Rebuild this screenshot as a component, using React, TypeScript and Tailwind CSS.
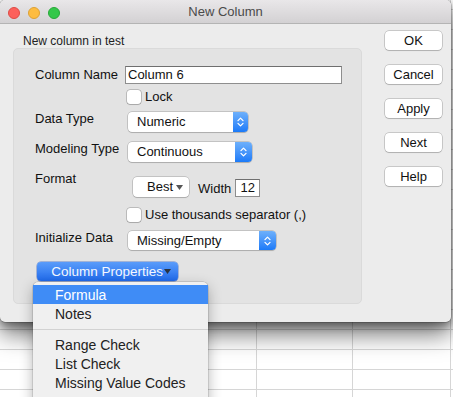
import React from "react";

function Stepper({ w }: { w: string }) {
  return (
    <div className={`${w} self-stretch rounded-r-[4px] bg-linear-to-b from-[#6db0fb] to-[#1a7af8] flex items-center justify-center`}>
      <svg width="7" height="12" viewBox="0 0 7 12" fill="none" stroke="white" strokeWidth="1.3" strokeLinecap="round" strokeLinejoin="round">
        <path d="M1 4.6 L3.5 2.1 L6 4.6" />
        <path d="M1 7.4 L3.5 9.9 L6 7.4" />
      </svg>
    </div>
  );
}

function Popup({ label, cls, step }: { label: string; cls: string; step: string }) {
  return (
    <div className={`flex ${cls} rounded-[4px] bg-white shadow-[0_0_0_0.5px_rgba(0,0,0,0.28),0_1px_1px_rgba(0,0,0,0.12)]`}>
      <div className="flex-1 pl-[9px] flex items-center text-[13px] leading-[16px] text-[#111]">{label}</div>
      <Stepper w={step} />
    </div>
  );
}

function Check() {
  return <div className="w-[14px] h-[14px] rounded-[3px] bg-white shadow-[0_0_0_0.5px_rgba(0,0,0,0.35),0_1px_1px_rgba(0,0,0,0.1)]" />;
}

function Btn({ label }: { label: string }) {
  return (
    <div className="w-[57px] h-[19px] rounded-[4px] bg-white shadow-[0_0_0_0.5px_rgba(0,0,0,0.3),0_1px_1px_rgba(0,0,0,0.12)] flex items-center justify-center text-[13px] leading-[16px] text-[#111]">
      {label}
    </div>
  );
}

const rows = Array.from({ length: 21 });

export default function App() {
  return (
    <div className="relative w-[453px] h-[397px] overflow-hidden bg-white font-['Liberation_Sans',Arial,sans-serif]">
      {/* spreadsheet behind */}
      <div className="-mt-[10px] flex flex-col">
        {rows.map((_, i) => (
          <div key={i} className="flex h-[20px] border-b border-[#d6d6d6]">
            <div className="w-[63px] border-r border-[#d6d6d6]" />
            <div className="w-[97px] border-r border-[#d6d6d6]" />
            <div className="w-[97px] border-r border-[#d6d6d6]" />
            <div className="w-[96px] border-r border-[#d6d6d6]" />
            <div className="w-[98px] border-r border-[#d6d6d6]" />
          </div>
        ))}
      </div>

      {/* window */}
      <div className="absolute left-0 top-0 w-[451px] h-[322px] rounded-[5px] bg-[#ececec] shadow-[0_4px_8px_rgba(0,0,0,0.35),0_12px_24px_rgba(0,0,0,0.55),0_0_0_0.5px_rgba(0,0,0,0.3)] flex flex-col overflow-hidden">
        {/* title bar */}
        <div className="relative h-[24px] shrink-0 bg-linear-to-b from-[#e9e7e9] to-[#d3d1d3] border-b border-[#b4b4b4] flex items-center justify-center">
          <div className="absolute left-[8px] top-[7px] flex gap-[8px]">
            <div className="w-[12px] h-[12px] rounded-full bg-[#fc605b] border border-[#de4b45]" />
            <div className="w-[12px] h-[12px] rounded-full bg-[#fdbc40] border border-[#dea134]" />
            <div className="w-[12px] h-[12px] rounded-full bg-[#34c84a] border border-[#27a838]" />
          </div>
          <span className="text-[13px] leading-[16px] text-[#4a4a4a] mt-[1px]">New Column</span>
        </div>

        {/* body */}
        <div className="flex">
          <div className="ml-[13px] w-[349px] flex flex-col">
            <div className="mt-[10px] ml-[10px] h-[14px] text-[12px] leading-[14px] text-[#222]">New column in test</div>
            <div className="h-[256px] rounded-[5px] bg-[#e3e3e3] border border-[#dadada] pt-[17px] pl-[21px] flex flex-col text-[13px] leading-[16px] text-[#111]">
              {/* Column Name */}
              <div className="flex items-center h-[18px]">
                <div className="w-[90px]">Column Name</div>
                <div className="w-[217px] h-[18px] bg-white border border-[#8e8e8e] border-t-[#6f6f6f] pl-[2px] flex items-center">Column 6</div>
              </div>
              {/* Lock */}
              <div className="mt-[6px] h-[14px] flex items-center pl-[92px]">
                <Check />
                <span className="ml-[4px]">Lock</span>
              </div>
              {/* Data Type */}
              <div className="mt-[8px] flex items-start">
                <div className="w-[93px] -mt-[1px]">Data Type</div>
                <Popup label="Numeric" cls="w-[120px] h-[20px]" step="w-[15px]" />
              </div>
              {/* Modeling Type */}
              <div className="mt-[10px] flex items-start">
                <div className="w-[93px] -mt-[1px]">Modeling Type</div>
                <Popup label="Continuous" cls="w-[124px] h-[20px]" step="w-[17px]" />
              </div>
              {/* Format */}
              <div className="mt-[15px] flex items-start">
                <div className="w-[98px] -mt-[6px]">Format</div>
                <div className="w-[56px] h-[20px] rounded-[4px] bg-white shadow-[0_0_0_0.5px_rgba(0,0,0,0.28),0_1px_1px_rgba(0,0,0,0.12)] flex items-center justify-end pr-[6px]">
                  <span>Best</span>
                  <svg width="7" height="5" viewBox="0 0 7 5" className="ml-[3px]">
                    <path d="M0 0 L7 0 L3.5 5 Z" fill="#555" />
                  </svg>
                </div>
                <div className="ml-[9px] mt-[4px]">Width</div>
                <div className="ml-[4px] mt-[2px] w-[25px] h-[18px] bg-white border border-[#8e8e8e] border-t-[#6f6f6f] flex items-center justify-center">12</div>
              </div>
              {/* thousands */}
              <div className="mt-[11px] h-[14px] flex items-center pl-[92px]">
                <Check />
                <span className="ml-[4px]">Use thousands separator (,)</span>
              </div>
              {/* Initialize Data */}
              <div className="mt-[9px] flex items-start">
                <div className="w-[93px] -mt-[1px]">Initialize Data</div>
                <Popup label="Missing/Empty" cls="w-[148px] h-[19px]" step="w-[17px]" />
              </div>
              {/* Column Properties */}
              <div className="mt-[12px] ml-[2px] w-[141px] h-[19px] rounded-[4px] bg-linear-to-b from-[#5a9cfa] to-[#1f6aec] shadow-[0_0_0_0.5px_rgba(20,70,180,0.6)] flex items-center justify-end pr-[7px]">
                <span className="text-[13.5px] text-[#f4f8ff]">Column Properties</span>
                <svg width="7" height="5" viewBox="0 0 7 5" className="ml-[1px]">
                  <path d="M0 0 L7 0 L3.5 5 Z" fill="#2b3340" />
                </svg>
              </div>
            </div>
          </div>

          <div className="ml-[23px] pt-[7px] flex flex-col gap-[15px]">
            <Btn label="OK" />
            <Btn label="Cancel" />
            <Btn label="Apply" />
            <Btn label="Next" />
            <Btn label="Help" />
          </div>
        </div>
      </div>

      {/* dropdown menu */}
      <div className="absolute left-[33px] top-[282px] w-[175px] h-[130px] rounded-[5px] bg-[#f0f0f0] shadow-[0_0_0_0.5px_rgba(0,0,0,0.2),0_5px_14px_rgba(0,0,0,0.3)] pt-[3px] flex flex-col text-[14px] leading-[16px] text-[#222]">
        <div className="h-[19px] bg-[#3f8cf6] text-white pl-[22px] flex items-center">Formula</div>
        <div className="h-[19px] pl-[22px] flex items-center">Notes</div>
        <div className="h-[12px] flex items-center">
          <div className="w-full h-px bg-[#d2d2d2]" />
        </div>
        <div className="h-[19px] pl-[22px] flex items-center">Range Check</div>
        <div className="h-[19px] pl-[22px] flex items-center">List Check</div>
        <div className="h-[19px] pl-[22px] flex items-center">Missing Value Codes</div>
      </div>
    </div>
  );
}
